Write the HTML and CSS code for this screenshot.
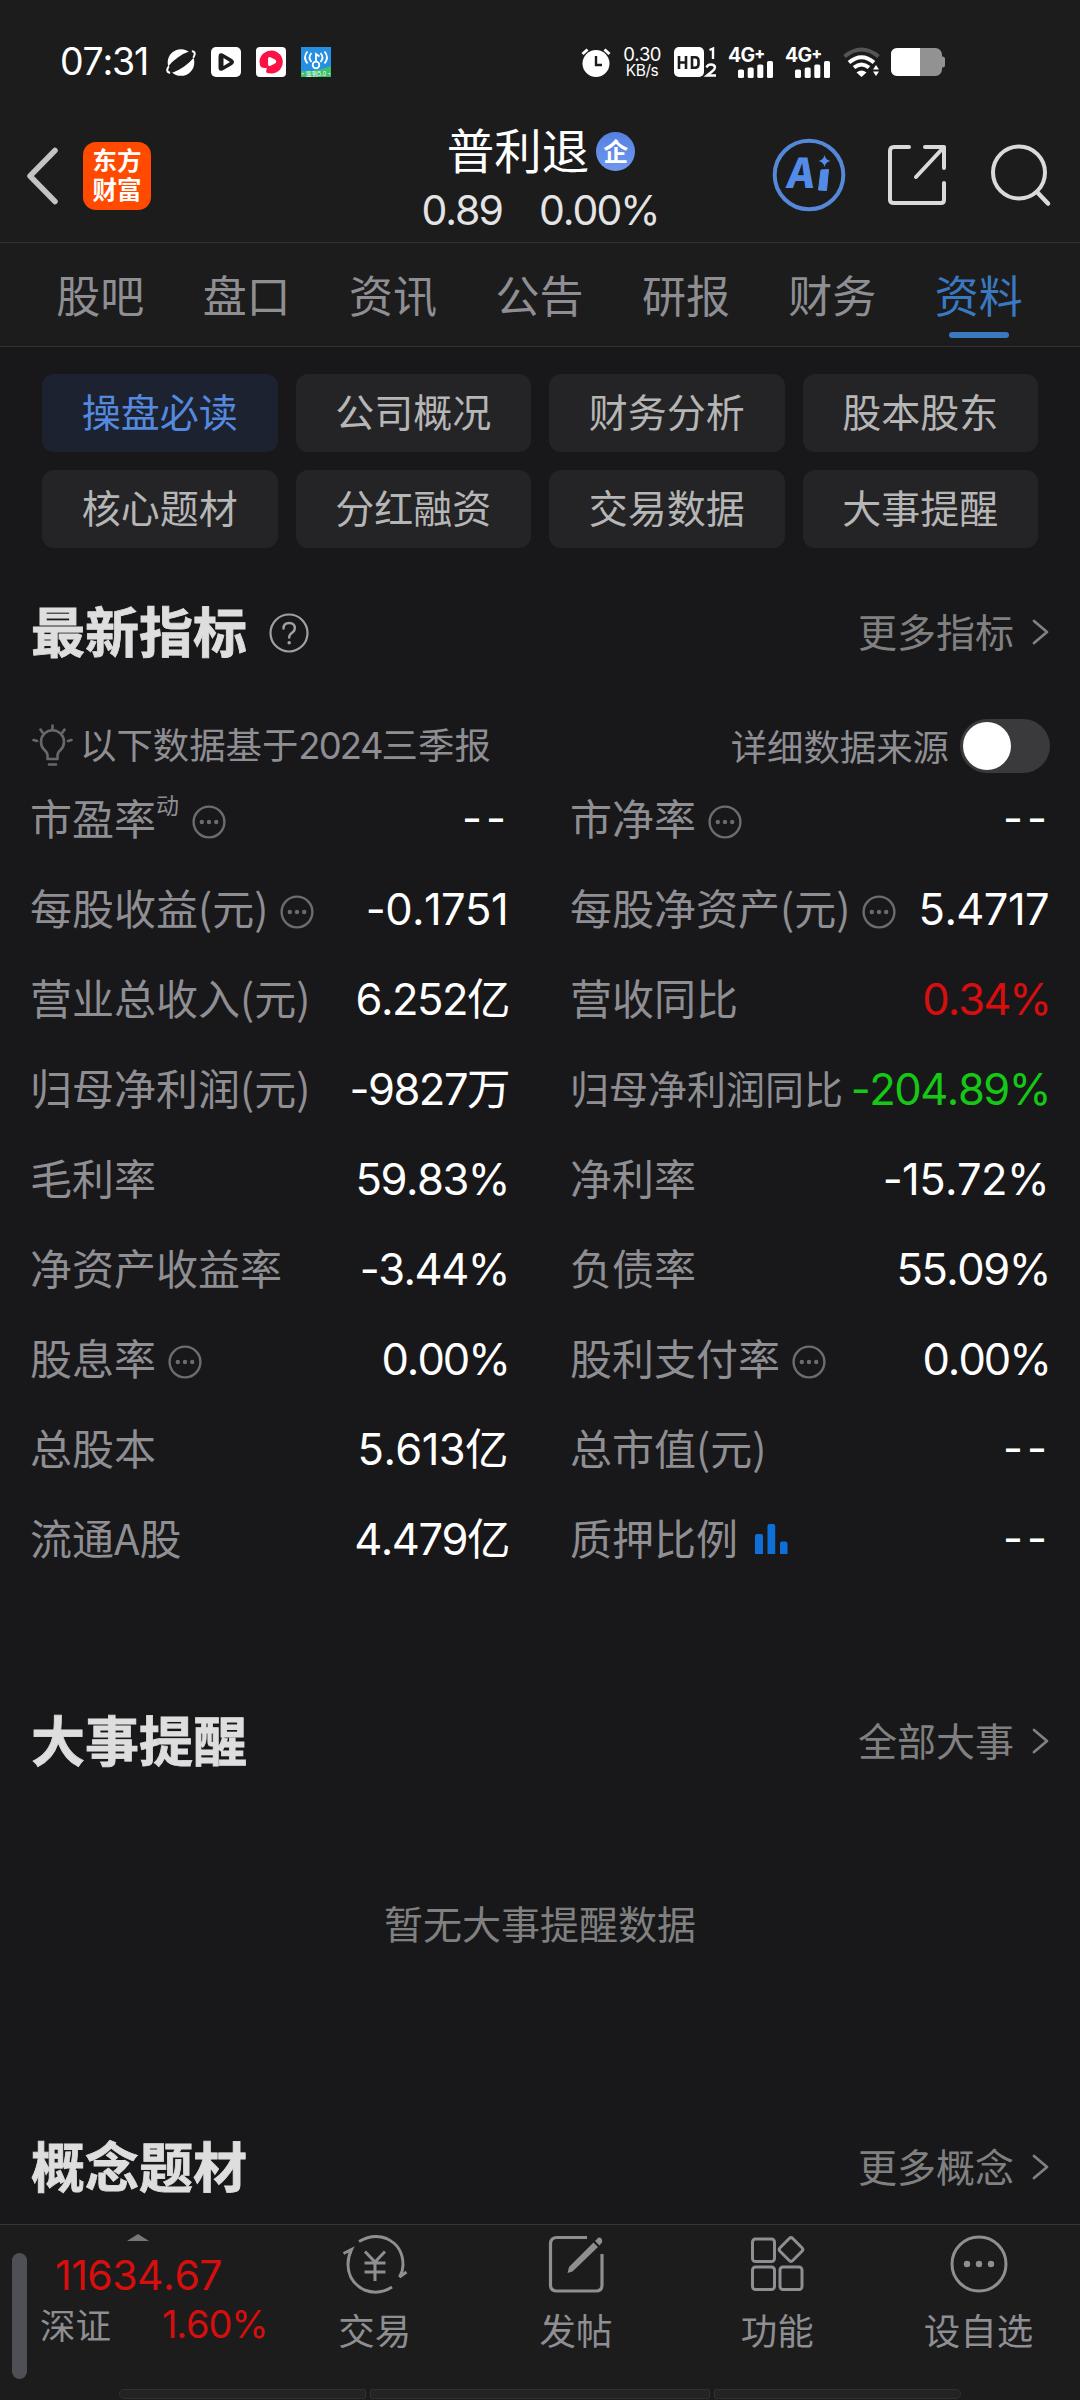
FILE: index.html
```html
<!DOCTYPE html>
<html lang="zh-CN">
<head>
<meta charset="utf-8">
<title>普利退 - 资料</title>
<link rel="stylesheet" href="styles.css">
</head>
<body>
<svg class="defs" width="0" height="0">
  <symbol id="more" viewBox="0 0 34 34"><circle cx="17" cy="17" r="15.4" fill="none" stroke="#6c6c6c" stroke-width="2.4"/><g fill="#6c6c6c"><circle cx="9.8" cy="17" r="2.2"/><circle cx="17" cy="17" r="2.2"/><circle cx="24.2" cy="17" r="2.2"/></g></symbol>
  <symbol id="chevron" viewBox="0 0 18 28"><path d="M3 3 16 14 3 25" fill="none" stroke="#808080" stroke-width="2.8" stroke-linecap="round" stroke-linejoin="round"/></symbol>
  <symbol id="signal" viewBox="0 0 36 17"><g fill="#fff"><rect x="0" y="8.500" width="6" height="8.500" rx="1.600"/><rect x="9.700" y="6.500" width="6" height="10.500" rx="1.600"/><rect x="19.300" y="3.500" width="6" height="13.500" rx="1.600"/><rect x="29" y="0" width="6" height="17" rx="1.600"/></g></symbol>
</svg>

<header class="top">
  <div class="status">
    <div class="status-left">
      <span class="clock">07:31</span>
      <svg width="30" height="30" viewBox="1 0 30 30"><circle cx="16" cy="15.500" r="13.300" fill="#fff"/><g transform="rotate(-35 16 15)"><ellipse cx="16" cy="15" rx="17" ry="5.600" fill="#1c1c1c"/><path d="M3.500 11.500C-.5 13-1.600 15.500 1 17.500M28.500 18.500c4-1.500 5.100-4 2.500-6" fill="none" stroke="#fff" stroke-width="2"/></g></svg>
      <svg width="30" height="30" viewBox="0 0 30 30"><rect width="30" height="30" rx="5" fill="#fff"/><path d="M11.500 6.500 21 12q4 3 0 6l-9.500 5.500Q7.500 25 7.500 20V10Q7.500 5 11.500 6.500Z" fill="#1c1c1c"/><path d="M12.500 11 19 15l-6.500 4Z" fill="#fff"/></svg>
      <svg width="30" height="30" viewBox="0 0 30 30"><rect width="30" height="30" rx="4" fill="#fff"/><path d="M15.500 3.500a11.500 11.500 0 1 1-5.500 21.700l.8-4.500Q6 22 4 18.500L3.500 14A12 11.500 0 0 1 15.500 3.500Z" fill="#fb1145"/><path d="M12 12q0-3 3-1.500l4 2q2.500 2 0 4l-4 2q-3 1.500-3-1.500Z" fill="#fff"/></svg>
      <svg width="30" height="30" viewBox="0 0 30 30"><rect width="30" height="30" fill="#2590e2"/><path d="M0 24Q16 25 30 19v11H0Z" fill="#3cc06e"/><g fill="none" stroke="#fff" stroke-width="1.800"><path d="M6.500 4.500q-5 6 0 12M10.500 6q-4 4.500 0 9M19.500 6q4 4.500 0 9M23.500 4.500q5 6 0 12"/><circle cx="15" cy="18" r="3.300"/><path d="M15 14.500V7l3.500 2.500"/></g><text x="15" y="28.500" class="tiny-text">·签到5.0·</text></svg>
    </div>
    <div class="status-right">
      <svg class="alarm" width="30" height="30" viewBox="0 0 30 30"><circle cx="15" cy="16.500" r="13.500" fill="#fff"/><path d="M15 9v9h6" fill="none" stroke="#1c1c1c" stroke-width="2.400"/><path d="M1.500 7 6.500 2.500M23.500 2.500l5 4.500" stroke="#fff" stroke-width="3"/></svg>
      <div class="speed"><b>0.30</b><span>KB/s</span></div>
      <svg class="hd" width="43" height="30" viewBox="0 0 43 30"><rect width="30" height="30" rx="5" fill="#fff"/><path d="M5 9v13M12 9v13M5 15.500h7M18 10.300h3q3.500 0 3.500 3.500v3.500q0 3.500-3.500 3.500h-3Z" fill="none" stroke="#1c1c1c" stroke-width="2.600"/><path d="M35.500 3 39 1.500V12M32.500 20.500q1-3 4.500-3t4 2.700q0 2-3 4.300l-5 4h9" fill="none" stroke="#fff" stroke-width="2.400"/></svg>
      <div class="net"><b>4G<i>+</i></b><svg width="36" height="17"><use href="#signal"/></svg></div>
      <div class="net"><b>4G<i>+</i></b><svg width="36" height="17"><use href="#signal"/></svg></div>
      <svg class="wifi" width="37" height="30" viewBox="0 0 37 30"><g fill="none" stroke-width="4"><path d="M1.500 9.500q17-14 34 0" stroke="#555"/><path d="M6 15.500q12.500-10.500 25 0M11 20.500q7.500-6 15 0" stroke="#fff"/></g><path d="M13.500 25.500q5-4 10 0L18.500 30ZM30 22.500l3-4.500 3 4.500ZM30 24.500l3 4.500 3-4.500Z" fill="#fff"/></svg>
      <svg class="battery" width="54" height="28" viewBox="0 0 54 28"><rect x="0" y="0" width="51" height="28" rx="6.500" fill="#929292"/><path d="M50 8.500h1.500q2.500 0 2.500 2.500v6q0 2.500-2.500 2.500H50Z" fill="#929292"/><path d="M29 0H6.500Q0 0 0 6.500v15Q0 28 6.500 28H29Z" fill="#fff"/></svg>
    </div>
  </div>
  <div class="titlebar">
    <div class="title-left">
      <svg width="34" height="58" viewBox="0 0 34 58"><path d="M30 3.500 5 29 30 54.500" fill="none" stroke="#c4c4c4" stroke-width="5.500" stroke-linecap="round" stroke-linejoin="round"/></svg>
      <div class="logo">东方<br>财富</div>
    </div>
    <div class="title-mid">
      <div class="stock"><span>普利退</span><i class="badge">企</i></div>
      <div class="quote"><span>0.89</span><span>0.00%</span></div>
    </div>
    <div class="title-right">
      <svg width="74" height="74" viewBox="0 0 74 74"><circle cx="37" cy="37" r="34.300" fill="none" stroke="#5588d8" stroke-width="4"/><text x="20" y="50.500" class="ai-text" transform="skewX(-7)">A</text><path d="m49 32 7.500-.5-2 21-8-.5Z" fill="#538ce8" stroke="#538ce8" stroke-linejoin="round"/><path d="M52.500 17q1 5 6 6-5 1-6 6-1-5-6-6 5-1 6-6Z" fill="#538ce8"/></svg>
      <svg class="share" width="58" height="60" viewBox="0 0 58 60"><path d="M21 2H6Q2 2 2 6v49q0 3 4 3h47q3 0 3-3V38M37 2h19v21M56 2 28 32" fill="none" stroke="#dadada" stroke-width="4" stroke-linecap="round" stroke-linejoin="round"/></svg>
      <svg class="search" width="60" height="62" viewBox="0 0 60 62"><circle cx="28" cy="28.500" r="26" fill="none" stroke="#dadada" stroke-width="4"/><path d="m46 48 11 11.500" stroke="#dadada" stroke-width="4.500" stroke-linecap="round"/></svg>
    </div>
  </div>
  <nav class="tabs">
    <a>股吧</a><a>盘口</a><a>资讯</a><a>公告</a><a>研报</a><a>财务</a><a class="active">资料</a>
  </nav>
</header>

<main>
  <div class="chips">
    <a class="active">操盘必读</a><a>公司概况</a><a>财务分析</a><a>股本股东</a>
    <a>核心题材</a><a>分红融资</a><a>交易数据</a><a>大事提醒</a>
  </div>

  <section class="metrics">
    <div class="head">
      <h2>最新指标</h2>
      <svg class="help" width="40" height="40" viewBox="0 0 40 40"><circle cx="20" cy="20" r="18.500" fill="none" stroke="#a0a0a0" stroke-width="2.200"/><path d="M14.500 15.500q0-5.500 5.700-5.500t5.600 5.200q0 2.800-3 4.800-2.600 1.700-2.600 4.500" fill="none" stroke="#a0a0a0" stroke-width="2.400" stroke-linecap="round"/><circle cx="20.200" cy="29.800" r="1.800" fill="#a0a0a0"/></svg>
      <a class="link"><span>更多指标</span><svg width="18" height="28"><use href="#chevron"/></svg></a>
    </div>
    <div class="source">
      <svg class="bulb" width="41" height="43" viewBox="0 0 41 43"><g fill="none" stroke="#686868" stroke-width="2.600" stroke-linecap="round"><path d="M15.500 31.500q0-3-3-5.500a11.500 11.500 0 1 1 16 0q-3 2.500-3 5.500v3.500h-10Z" stroke-linejoin="round"/><path d="M17 40.500h7M20.500 1.500V5M8.500 5.500l2 3M32.500 5.500l-2 3M1.500 16l3.500 1M39.500 16 36 17"/></g></svg>
      <span>以下数据基于<span class="num">2024</span>三季报</span>
      <span class="detail">详细数据来源</span>
      <i class="switch"></i>
    </div>
    <div class="grid">
      <div class="row"><label>市盈率<sup>动</sup><svg class="info"><use href="#more"/></svg></label><b class="dash">--</b></div>
      <div class="row"><label>市净率<svg class="info"><use href="#more"/></svg></label><b class="dash">--</b></div>
      <div class="row"><label>每股收益(元)<svg class="info"><use href="#more"/></svg></label><b class="loose">-0.1751</b></div>
      <div class="row"><label>每股净资产(元)<svg class="info"><use href="#more"/></svg></label><b class="loose">5.4717</b></div>
      <div class="row"><label>营业总收入(元)</label><b>6.252亿</b></div>
      <div class="row"><label>营收同比</label><b class="up">0.34%</b></div>
      <div class="row"><label>归母净利润(元)</label><b>-9827万</b></div>
      <div class="row"><label class="small">归母净利润同比</label><b class="down">-204.89%</b></div>
      <div class="row"><label>毛利率</label><b>59.83%</b></div>
      <div class="row"><label>净利率</label><b class="loose">-15.72%</b></div>
      <div class="row"><label>净资产收益率</label><b>-3.44%</b></div>
      <div class="row"><label>负债率</label><b>55.09%</b></div>
      <div class="row"><label>股息率<svg class="info"><use href="#more"/></svg></label><b class="zeros">0.00%</b></div>
      <div class="row"><label>股利支付率<svg class="info"><use href="#more"/></svg></label><b class="zeros">0.00%</b></div>
      <div class="row"><label>总股本</label><b class="loose">5.613亿</b></div>
      <div class="row"><label>总市值(元)</label><b class="dash">--</b></div>
      <div class="row"><label>流通A股</label><b>4.479亿</b></div>
      <div class="row"><label>质押比例<svg class="bars" width="34" height="30" viewBox="0 0 34 30"><g fill="#0f6fd8"><path d="M0 30V12q0-2 2-2h4q2 0 2 2v18ZM12.500 30V2q0-2 2-2h3.700q2 0 2 2v28ZM25 30V19.500q0-2 2-2h3.500q2 0 2 2V30Z"/></g></svg></label><b class="dash">--</b></div>
    </div>
  </section>

  <section class="events">
    <div class="head">
      <h2>大事提醒</h2>
      <a class="link"><span>全部大事</span><svg width="18" height="28"><use href="#chevron"/></svg></a>
    </div>
    <p class="empty">暂无大事提醒数据</p>
  </section>

  <section class="concepts">
    <div class="head">
      <h2>概念题材</h2>
      <a class="link"><span>更多概念</span><svg width="18" height="28"><use href="#chevron"/></svg></a>
    </div>
  </section>
</main>

<footer class="bottom">
  <i class="handle"></i>
  <div class="index">
    <i class="caret"></i>
    <div class="points">11634.67</div>
    <div class="change"><span>深证</span><b>1.60%</b></div>
  </div>
  <nav class="actions">
    <a><svg width="66" height="62" viewBox="0 0 66 62"><g fill="none" stroke="#8e8e93" stroke-width="3"><path d="M17 8.500Q31 .5 44.500 5.500 61 13 61 32q0 6-3.500 12l7-5M50 54Q37 62.500 22.500 57 6 49 6 31q0-7 3.500-14.500l-8 4"/><path d="M23 18.500 33 29l10-10.500M33 29v19M22.500 30h21M22.500 39h21"/></g></svg><span>交易</span></a>
    <a><svg width="66" height="62" viewBox="0 0 66 62"><path d="M44 4.500H14Q7.500 4.500 7.500 11v41q0 6 6.500 6h39q6 0 6-6V21" fill="none" stroke="#8e8e93" stroke-width="3.200"/><path d="m24.500 40 1.500-6 24.500-24.500 4.500 4.500L29.500 38.500ZM52 8l3.500-3.500q4.500 0 3.500 5L56.500 12.500Z" fill="#8e8e93"/></svg><span>发帖</span></a>
    <a><svg width="66" height="62" viewBox="0 0 66 62"><g fill="none" stroke="#8e8e93" stroke-width="3"><rect x="8.500" y="6" width="22" height="22.500" rx="3"/><rect x="8.500" y="34" width="22" height="22.500" rx="3"/><rect x="36" y="34" width="22" height="22.500" rx="3"/><rect x="38" y="7.500" width="18" height="18" rx="2.500" transform="rotate(45 47 16.500)"/></g></svg><span>功能</span></a>
    <a><svg width="66" height="62" viewBox="0 0 66 62"><circle cx="33" cy="31" r="27" fill="none" stroke="#8e8e93" stroke-width="3"/><g fill="#8e8e93"><circle cx="21" cy="31" r="3.200"/><circle cx="33" cy="31" r="3.200"/><circle cx="45" cy="31" r="3.200"/></g></svg><span>设自选</span></a>
  </nav>
  <div class="gesture"><i></i><i></i><i></i></div>
</footer>
</body>
</html>
```
FILE: styles.css
```css
* { box-sizing: border-box; }
body {
  margin: 0;
  width: 1080px;
  height: 2400px;
  overflow: hidden;
  display: flex;
  flex-direction: column;
  background: #18181a;
  color: #fff;
  font-family: "Noto Sans CJK SC", sans-serif;
  font-kerning: none;
}
svg { display: block; flex: none; overflow: visible; }
.defs { position: absolute; }
b, i { font-weight: 400; font-style: normal; }
.clock, .speed, .net, .quote, .row b, .points, .change b, .num { font-family: Inter, "Noto Sans CJK SC", sans-serif; }

/* header */
.top { background: #1c1c1c; height: 347px; flex: none; border-bottom: 1px solid #323234; }
.status { height: 124px; padding: 0 135px 0 60px; display: flex; justify-content: space-between; align-items: center; }
.status-left { display: flex; align-items: center; gap: 15px; }
.clock { font-size: 37.500px; line-height: 40px; letter-spacing: -1.200px; width: 91px; }
.tiny-text { font-size: 6px; fill: #fff; text-anchor: middle; }
.status-right { display: flex; align-items: center; }
.speed { width: 40px; margin: 0 12px 0 11px; display: flex; flex-direction: column; align-items: center; }
.speed b { font-size: 18.500px; line-height: 17px; letter-spacing: -.6px; }
.speed span { font-size: 15.500px; line-height: 15px; letter-spacing: -.4px; }
.hd { margin-right: 11px; }
.net { width: 46px; height: 31px; margin-right: 11px; display: flex; flex-direction: column; align-items: flex-end; }
.net b { width: 46px; height: 14px; font-size: 19.500px; line-height: 16px; letter-spacing: -.8px; font-weight: 700; white-space: nowrap; }
.net b i { font-weight: 800; font-size: 16px; vertical-align: 3px; line-height: 0; }
.net + .wifi { margin-left: 1px; }
.battery { margin-left: 11px; }

.titlebar { height: 119px; border-bottom: 1px solid #323234; display: grid; grid-template-columns: 1fr 260px 1fr; }
.title-left { display: flex; align-items: center; gap: 24px; padding: 0 0 15px 25px; }
.logo { width: 68px; height: 68px; border-radius: 13px; background: #ff4a00; text-align: center; font-weight: 700; font-size: 24.500px; line-height: 29px; padding-top: 3px; }
.title-mid { display: flex; flex-direction: column; align-items: center; }
.stock { height: 54px; display: flex; align-items: center; gap: 7px; padding-left: 2px; font-size: 47.500px; line-height: 54px; white-space: nowrap; }
.stock span { margin-top: -4px; }
.badge { width: 39px; height: 39px; border-radius: 50%; background: linear-gradient(#5581e2, #6f98ec); font-size: 25px; line-height: 36px; text-align: center; font-weight: 700; }
.quote { height: 64px; display: flex; gap: 37px; font-size: 41px; line-height: 65px; letter-spacing: -2px; color: #e4e4e4; }
.title-right { display: flex; align-items: center; justify-content: flex-end; padding: 0 29px 16px 0; }
.share { margin: 0 45px 0 42px; }
.ai-text { font: 900 41px "Noto Sans CJK SC", sans-serif; fill: #538ce8; }

.tabs { height: 103px; padding: 0 28px 0 27px; display: flex; }
.tabs a { flex: 1; font-size: 44px; line-height: 103px; text-align: center; color: #8e8e93; }
.tabs .active { color: #3a78c2; position: relative; }
.tabs .active::after { content: ""; position: absolute; left: 43px; top: 89px; width: 60px; height: 6px; border-radius: 3px; background: #3a78c2; }

/* section shortcuts */
.chips { padding: 27px 42px 0; display: grid; grid-template-columns: repeat(4, 1fr); gap: 18px; }
.chips a { height: 78px; border-radius: 12px; background: #242426; color: #b6b6b6; font-size: 39px; line-height: 73px; text-align: center; }
.chips .active { background: #1c2230; color: #5489df; }

.head { height: 80px; padding: 0 31px; display: flex; align-items: center; }
h2 { margin: -5px 0 0; font-size: 54px; line-height: 80px; font-weight: 700; color: #dedede; -webkit-text-stroke: .8px #dedede; }
.help { margin: 2px 0 0 22px; }
.link { margin-left: auto; display: flex; align-items: center; gap: 17px; font-size: 39px; line-height: 80px; color: #808080; }
.link span { margin-top: -4px; }

.metrics { padding-top: 44px; }
.source { height: 101px; padding: 47px 30px 0 32px; display: flex; align-items: center; font-size: 36.400px; line-height: 54px; color: #8e8e93; }
.source > span { margin-top: -3px; }
.num { letter-spacing: -1.900px; }
.bulb { margin-right: 7px; margin-top: -2px; }
.source .detail { margin-left: auto; }
.switch { width: 90px; height: 54px; margin-left: 11px; border-radius: 27px; background: #3a3a3c; padding: 3px; }
.switch::before { content: ""; display: block; width: 48px; height: 48px; border-radius: 50%; background: #fff; }

.grid { padding: 0 30px; display: grid; grid-template-columns: 479px 480px; column-gap: 61px; }
.row { height: 90px; display: flex; justify-content: space-between; align-items: center; white-space: nowrap; }
.row label { display: flex; align-items: center; margin-top: -2px; font-size: 42px; line-height: 90px; color: #8e8e93; }
.row .small { font-size: 39px; }
.row sup { font-size: 23px; line-height: 26px; margin: -26px 1px 0 0; vertical-align: baseline; }
.info { width: 34px; height: 34px; margin: 10px 0 0 12px; }
.bars { margin: 4px 0 0 17px; }
.row b { font-size: 43.500px; line-height: 90px; letter-spacing: -1.500px; margin: 2px 0 0; }
.row .loose { letter-spacing: -.6px; margin-right: 1px; }
.row .zeros { letter-spacing: -2px; }
.row .dash { letter-spacing: 4px; margin: 0 -1px 0 0; }
.row .up { color: #d60e0e; letter-spacing: -2px; }
.row .down { color: #16c816; }

.events { padding-top: 118px; }
.empty { margin: 0; padding-top: 111px; font-size: 39px; line-height: 60px; text-align: center; color: #808080; }
.concepts { padding-top: 175px; }

/* bottom bar */
.bottom { position: absolute; left: 0; top: 2224px; width: 1080px; height: 176px; background: #1c1c1c; border-top: 1px solid #353535; display: grid; grid-template-columns: 40px 234px 1fr; grid-template-rows: 164px 10px; }
.handle { width: 15px; height: 126px; margin: 28px 0 0 12px; border-radius: 8px; background: #4f5056; }
.index { padding-top: 9px; color: #d60e0e; }
.caret { display: block; width: 0; height: 0; margin-left: 87px; border: 11px solid transparent; border-top: 0; border-bottom: 7px solid #77777a; }
.points { font-size: 41px; line-height: 50px; padding-left: 15px; letter-spacing: -.5px; margin-top: 9px; }
.change { display: flex; gap: 51px; font-size: 38px; line-height: 40px; margin-top: 4px; }
.change b { letter-spacing: -1.200px; }
.change span { font-size: 35.500px; color: #8e8e93; }
.actions { display: grid; grid-template-columns: repeat(4, 201.300px); padding-top: 8px; }
.actions a { display: flex; flex-direction: column; align-items: center; font-size: 36.500px; line-height: 54px; color: #8e8e93; }
.actions span { margin-top: 8px; }
.gesture { grid-column: 1 / -1; padding: 0 119px; display: grid; grid-template-columns: 247px 340px 247px; gap: 4px; }
.gesture i { height: 10px; background: #232323; border: 1.500px solid #303030; border-radius: 2px; }
.gesture i:first-child { border-radius: 5px 2px 2px 5px; }
.gesture i:last-child { border-radius: 2px 5px 5px 2px; }
```
